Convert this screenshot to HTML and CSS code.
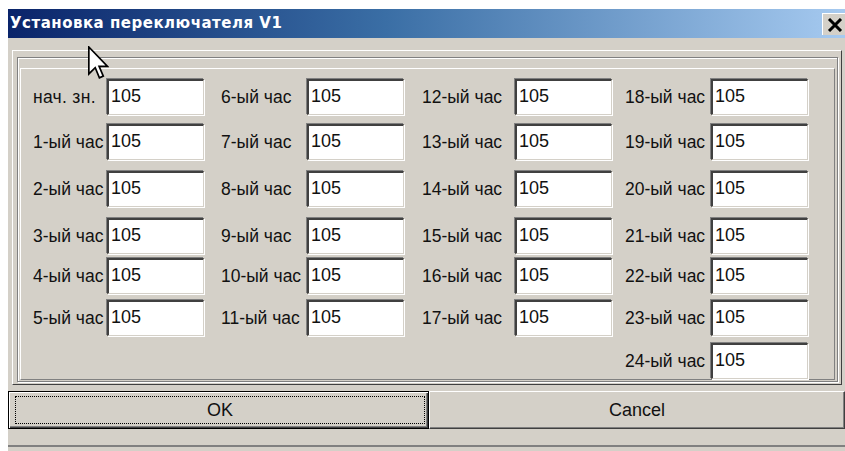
FILE: index.html
```html
<!DOCTYPE html>
<html lang="ru">
<head>
<meta charset="utf-8">
<title>Установка переключателя V1</title>
<link rel="stylesheet" href="styles.css">
</head>
<body>
<div class="window">
  <div class="titlebar">
    <span class="title">Установка переключателя V1</span>
    <div class="close">
      <svg width="16" height="14" viewBox="0 0 16 14"><path d="M2 1 L14 13 M14 1 L2 13" stroke="#000" stroke-width="3"/></svg>
    </div>
  </div>
  <div class="client">
    <div class="frame">
      <div class="groupbox">
        <div class="panel">
          <div class="grid">
            <label class="lbl c1 first">нач. зн.</label><div class="edit">105</div>
            <label class="lbl c2">6-ый час</label><div class="edit">105</div>
            <label class="lbl c3">12-ый час</label><div class="edit">105</div>
            <label class="lbl c4">18-ый час</label><div class="edit">105</div>

            <label class="lbl c1">1-ый час</label><div class="edit">105</div>
            <label class="lbl c2">7-ый час</label><div class="edit">105</div>
            <label class="lbl c3">13-ый час</label><div class="edit">105</div>
            <label class="lbl c4">19-ый час</label><div class="edit">105</div>

            <label class="lbl c1">2-ый час</label><div class="edit">105</div>
            <label class="lbl c2">8-ый час</label><div class="edit">105</div>
            <label class="lbl c3">14-ый час</label><div class="edit">105</div>
            <label class="lbl c4">20-ый час</label><div class="edit">105</div>

            <label class="lbl c1">3-ый час</label><div class="edit">105</div>
            <label class="lbl c2">9-ый час</label><div class="edit">105</div>
            <label class="lbl c3">15-ый час</label><div class="edit">105</div>
            <label class="lbl c4">21-ый час</label><div class="edit">105</div>

            <label class="lbl c1">4-ый час</label><div class="edit">105</div>
            <label class="lbl c2">10-ый час</label><div class="edit">105</div>
            <label class="lbl c3">16-ый час</label><div class="edit">105</div>
            <label class="lbl c4">22-ый час</label><div class="edit">105</div>

            <label class="lbl c1">5-ый час</label><div class="edit">105</div>
            <label class="lbl c2">11-ый час</label><div class="edit">105</div>
            <label class="lbl c3">17-ый час</label><div class="edit">105</div>
            <label class="lbl c4">23-ый час</label><div class="edit">105</div>

            <label class="lbl c4 last">24-ый час</label><div class="edit">105</div>
          </div>
        </div>
      </div>
    </div>
    <div class="buttons">
      <button class="btn btn-default"><span class="focus">OK</span></button>
      <button class="btn btn-cancel">Cancel</button>
    </div>
    <div class="statusbar"></div>
  </div>
</div>
<svg class="cursor" width="21" height="34" viewBox="0 0 12.5 20">
  <path d="M0.5 0.5 L0.5 16.5 L4.3 12.8 L6.8 18.8 L9.1 17.8 L6.6 12 L11.6 12 Z" fill="#fff" stroke="#000" stroke-width="1" stroke-linejoin="miter"/>
</svg>
</body>
</html>
```

FILE: styles.css
```css
html, body {
  margin: 0;
  height: 100%;
  overflow: hidden;
  background: #fff;
}

body {
  padding: 9px 0 0 8px;
  box-sizing: border-box;
  position: relative;
  font-family: "Liberation Sans", Arial, sans-serif;
}

.window {
  width: 837px;
  height: 442px;
  display: flex;
  flex-direction: column;
}

/* caption */
.titlebar {
  height: 29px;
  flex: none;
  display: flex;
  align-items: flex-start;
  justify-content: space-between;
  background: linear-gradient(to right, #0a246a 0%, #3a6ea5 45%, #a6caf0 100%);
}

.title {
  color: #fff;
  font-family: "DejaVu Sans", sans-serif;
  font-weight: bold;
  font-size: 15px;
  line-height: 29px;
  padding-left: 2px;
  letter-spacing: 0.5px;
}

.close {
  width: 23px;
  height: 22px;
  margin-top: 4px;
  box-sizing: border-box;
  background: #d4d0c8;
  border-top: 1px solid #fff;
  border-left: 1px solid #fff;
  display: flex;
  align-items: center;
  justify-content: center;
  padding-left: 2px;
}

.close svg {
  display: block;
}

/* window body */
.client {
  flex: 1;
  background: #d4d0c8;
  display: flex;
  flex-direction: column;
}

.frame {
  margin: 12px 3px 0 4px;
  height: 335px;
  box-sizing: border-box;
  border: 1px solid;
  border-color: #fff #404040 #404040 #fff;
  padding: 6px 3px 2px 4px;
  display: flex;
}

.groupbox {
  flex: 1;
  border: 1px solid #808080;
  box-shadow: inset 1px 1px 0 #fff, 1px 1px 0 #fff;
  padding: 10px 2px 1px 2px;
  display: flex;
}

.panel {
  flex: 1;
  border: 1px solid;
  border-color: #fff #808080 #808080 #fff;
}

.grid {
  display: grid;
  grid-template-columns: 74px 97px 103px 97px 111px 97px 99px 97px;
  grid-template-rows: 45px 47px 47px 40px 42px 43px 36px;
  padding: 10px 0 0 12px;
  align-items: start;
}

.lbl {
  height: 36px;
  display: flex;
  align-items: center;
  font-size: 17.5px;
  color: #111;
  white-space: nowrap;
}

.lbl.first { letter-spacing: 0.3px; }
.lbl.c2 { padding-left: 17px; }
.lbl.c3 { padding-left: 18px; }
.lbl.c4 { padding-left: 13px; }
.lbl.last { grid-column-start: 7; }

.edit {
  height: 36px;
  box-sizing: border-box;
  background: #fff;
  border-top: 2px solid #404040;
  border-left: 2px solid #404040;
  border-right: 1px solid #d4d0c8;
  border-bottom: 1px solid #d4d0c8;
  box-shadow: -1px -1px 0 #808080, 1px 1px 0 #fff;
  font-size: 18px;
  line-height: 30px;
  padding-left: 2px;
  color: #111;
}

/* dialog buttons */
.buttons {
  display: flex;
  margin-top: 6px;
  height: 38px;
}

.btn {
  margin: 0;
  height: 38px;
  box-sizing: border-box;
  font-family: "Liberation Sans", Arial, sans-serif;
  font-size: 18px;
  color: #111;
  background: #d4d0c8;
  padding: 0;
}

.btn-default {
  width: 421px;
  border: 1px solid #000;
  box-shadow: inset 1px 1px 0 #fff, inset -1px -1px 0 #404040, inset -2px -2px 0 #808080;
  padding: 4px 3px 4px 6px;
  display: flex;
}

.focus {
  flex: 1;
  border: 1px dotted #000;
  display: flex;
  align-items: center;
  justify-content: center;
}

.btn-cancel {
  flex: 1;
  border: 1px solid;
  border-color: #fff #404040 #404040 #fff;
  box-shadow: inset -1px -1px 0 #808080;
}

.statusbar {
  height: 16px;
  border-bottom: 2px solid #808080;
}

/* mouse pointer over the dialog */
.cursor {
  position: absolute;
  left: 88px;
  top: 46px;
}
```
